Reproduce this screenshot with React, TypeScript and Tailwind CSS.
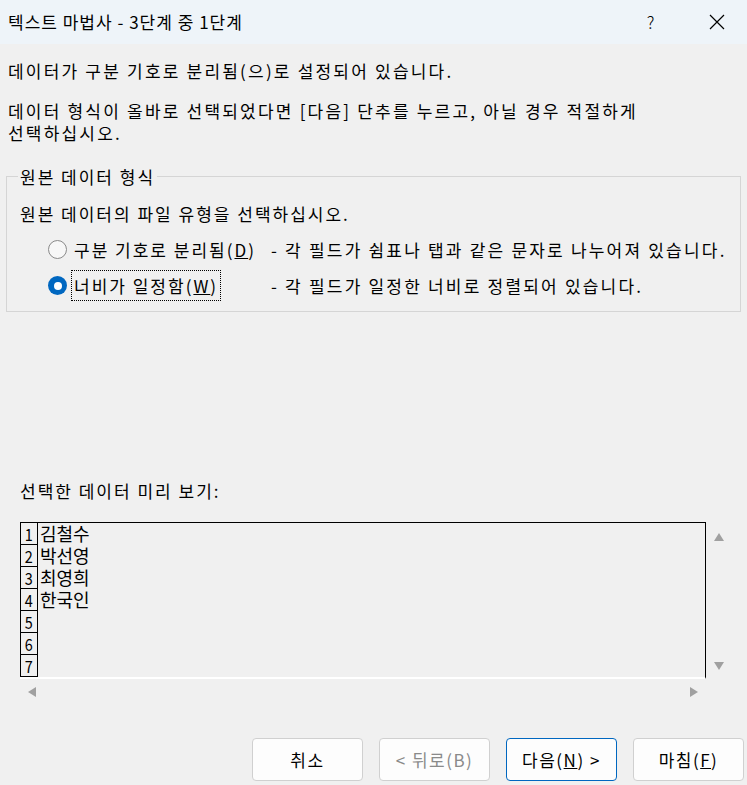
import React from "react";

const FONT = { fontFamily: '"Noto Sans CJK KR", "Noto Sans", sans-serif' };

const ROWS = ["김철수", "박선영", "최영희", "한국인", "", "", ""];

function Radio({ checked }: { checked: boolean }) {
  return checked ? (
    <span className="w-[19px] h-[19px] rounded-full bg-[#0067c0] flex items-center justify-center shrink-0">
      <span className="w-[8px] h-[8px] rounded-full bg-white" />
    </span>
  ) : (
    <span className="w-[19px] h-[19px] rounded-full border border-[#8a8a8a] bg-[#f7f7f7] shrink-0" />
  );
}

function Btn({ children, primary, disabled }: { children: React.ReactNode; primary?: boolean; disabled?: boolean }) {
  return (
    <button
      className={
        "w-[111px] h-[43px] rounded-[4px] bg-[#fdfdfd] text-[17px] tracking-[1.5px] border " +
        (primary ? "border-[#0067c0] " : "border-[#d0d0d0] ") +
        (disabled ? "text-[#8a8a8a]" : "text-black")
      }
    >
      {children}
    </button>
  );
}

export default function App() {
  return (
    <div className="w-[747px] h-[785px] bg-[#f0f0f0] text-black flex flex-col overflow-hidden" style={FONT}>
      <div className="h-[44px] bg-[#eef4f9] flex items-center pl-[8px] text-[17px] tracking-[1px]">
        <span className="flex-1 whitespace-nowrap">텍스트 마법사 - 3단계 중 1단계</span>
        <span className="w-[20px] text-center mr-[48px] text-[17px] font-light">?</span>
        <svg width="16" height="16" viewBox="0 0 16 16" className="mr-[22px]">
          <path d="M1 1 L15 15 M15 1 L1 15" stroke="#000" strokeWidth="1.2" />
        </svg>
      </div>

      <div className="px-[8px] pt-[16px] text-[17px] tracking-[2.2px] leading-[22px]">
        <p>데이터가 구분 기호로 분리됨(으)로 설정되어 있습니다.</p>
        <p className="mt-[18px]">
          데이터 형식이 올바로 선택되었다면 [다음] 단추를 누르고, 아닐 경우 적절하게
          <br />
          선택하십시오.
        </p>
      </div>

      <fieldset className="mx-[6px] mt-[20px] h-[148px] border border-[#d5d5d5] px-[13px] pt-[13px] text-[17px] tracking-[2px]">
        <legend className="px-[2px] -ml-[2px]">원본 데이터 형식</legend>
        <p className="leading-[22px]">원본 데이터의 파일 유형을 선택하십시오.</p>
        <div className="mt-[12px] ml-[28px] flex items-center h-[26px]">
          <Radio checked={false} />
          <span className="ml-[7px] w-[197px] whitespace-nowrap">
            구분 기호로 분리됨(<u>D</u>)
          </span>
          <span className="whitespace-nowrap tracking-[2.2px]">- 각 필드가 쉼표나 탭과 같은 문자로 나누어져 있습니다.</span>
        </div>
        <div className="mt-[9px] ml-[28px] flex items-center h-[28px]">
          <Radio checked />
          <span className="ml-[4px] w-[200px] whitespace-nowrap">
            <span className="border border-dotted border-black px-[2px] py-[2px]">
              너비가 일정함(<u>W</u>)
            </span>
          </span>
          <span className="whitespace-nowrap tracking-[2.2px]">- 각 필드가 일정한 너비로 정렬되어 있습니다.</span>
        </div>
      </fieldset>

      <p className="ml-[20px] mt-[168px] text-[17px] tracking-[2px] leading-[22px]">선택한 데이터 미리 보기:</p>

      <div className="mt-[20px] flex ml-[20px]">
        <div className="w-[686px] h-[157px] border-t border-r border-black border-b-2 border-b-white flex flex-col">
          {ROWS.map((r, i) => (
            <div key={i} className="h-[22px] flex items-stretch">
              <div className="w-[18px] shrink-0 border-l border-r border-b border-black flex items-end justify-center text-[17px] leading-[20px]">
                <span className="inline-block scale-x-[0.85]">{i + 1}</span>
              </div>
              <div className="pl-[2px] text-[18px] leading-[20px] whitespace-nowrap">{r}</div>
            </div>
          ))}
        </div>
        <div className="ml-[6px] w-[14px] flex flex-col justify-between pt-[10px] pb-[8px] items-center">
          <svg width="12" height="10" viewBox="0 0 12 10"><path d="M6 1 L11 9 L1 9 Z" fill="#a0a0a0" /></svg>
          <svg width="12" height="10" viewBox="0 0 12 10"><path d="M1 1 L11 1 L6 9 Z" fill="#a0a0a0" /></svg>
        </div>
      </div>
      <div className="ml-[27px] w-[672px] mt-[7px] flex justify-between">
        <svg width="10" height="12" viewBox="0 0 10 12"><path d="M9 1 L9 11 L1 6 Z" fill="#a0a0a0" /></svg>
        <svg width="10" height="12" viewBox="0 0 10 12"><path d="M1 1 L9 6 L1 11 Z" fill="#a0a0a0" /></svg>
      </div>

      <div className="mt-auto mb-[4px] mr-[3px] flex justify-end gap-[16px]">
        <Btn>취소</Btn>
        <Btn disabled>&lt; 뒤로(B)</Btn>
        <Btn primary>
          다음(<u>N</u>) &gt;
        </Btn>
        <Btn>
          마침(<u>F</u>)
        </Btn>
      </div>
    </div>
  );
}
